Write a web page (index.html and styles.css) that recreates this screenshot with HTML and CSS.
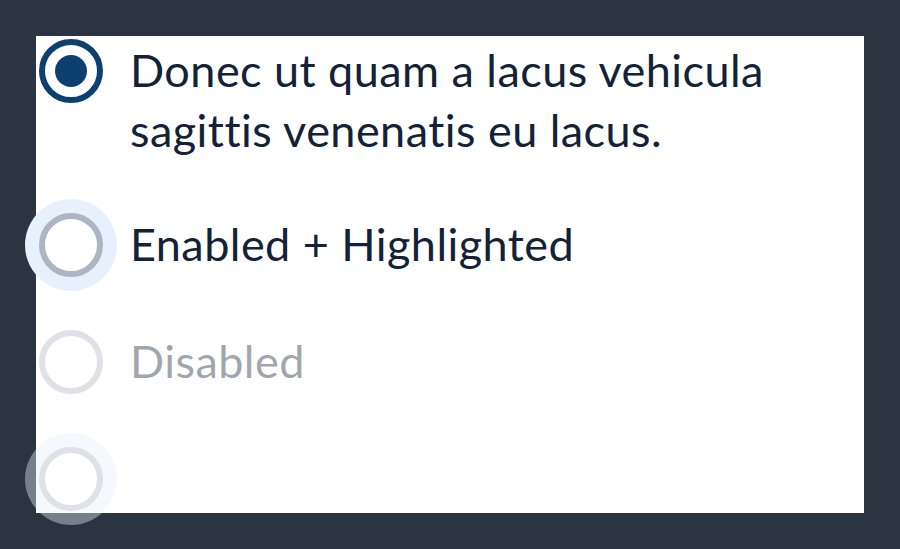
FILE: index.html
```html
<!DOCTYPE html>
<html lang="en">
<head>
<meta charset="utf-8">
<title>Radio group</title>
<link rel="stylesheet" href="styles.css">
</head>
<body>
<div class="panel">
  <div class="row">
    <span class="radio checked"><span class="dot"></span></span>
    <span class="label">Donec ut quam a lacus vehicula sagittis venenatis eu lacus.</span>
  </div>
  <div class="row">
    <span class="radio highlight"></span>
    <span class="label">Enabled + Highlighted</span>
  </div>
  <div class="row disabled">
    <span class="radio"></span>
    <span class="label">Disabled</span>
  </div>
  <div class="row disabled">
    <span class="radio highlight"></span>
  </div>
</div>
</body>
</html>
```

FILE: styles.css
```css
html, body {
  margin: 0;
  padding: 0;
}
body {
  background: #2b3441;
  padding: 36px;
  font-family: "Lato", "Noto Sans", sans-serif;
  color: #132237;
}
.panel {
  background: #ffffff;
  width: 828px;
  box-sizing: border-box;
  padding: 3px 60px 2px 3px;
  display: flex;
  flex-direction: column;
  gap: 53px;
}
.row {
  display: flex;
  align-items: flex-start;
  gap: 27px;
}
.radio {
  flex: none;
  width: 64px;
  height: 64px;
  box-sizing: border-box;
  border: 6px solid #adb5c3;
  border-radius: 50%;
  background: #fff;
  display: flex;
  align-items: center;
  justify-content: center;
}
.radio.checked {
  border-color: #0b4070;
}
.radio .dot {
  width: 32px;
  height: 32px;
  border-radius: 50%;
  background: #0b4070;
}
.radio.highlight {
  box-shadow: 0 0 0 14px #e7f1fd;
}
.label {
  font-size: 45px;
  letter-spacing: 0.45px;
  font-variant-ligatures: none;
  line-height: 60px;
  padding-top: 1px;
}
.row.disabled {
  opacity: 0.4;
}
```
